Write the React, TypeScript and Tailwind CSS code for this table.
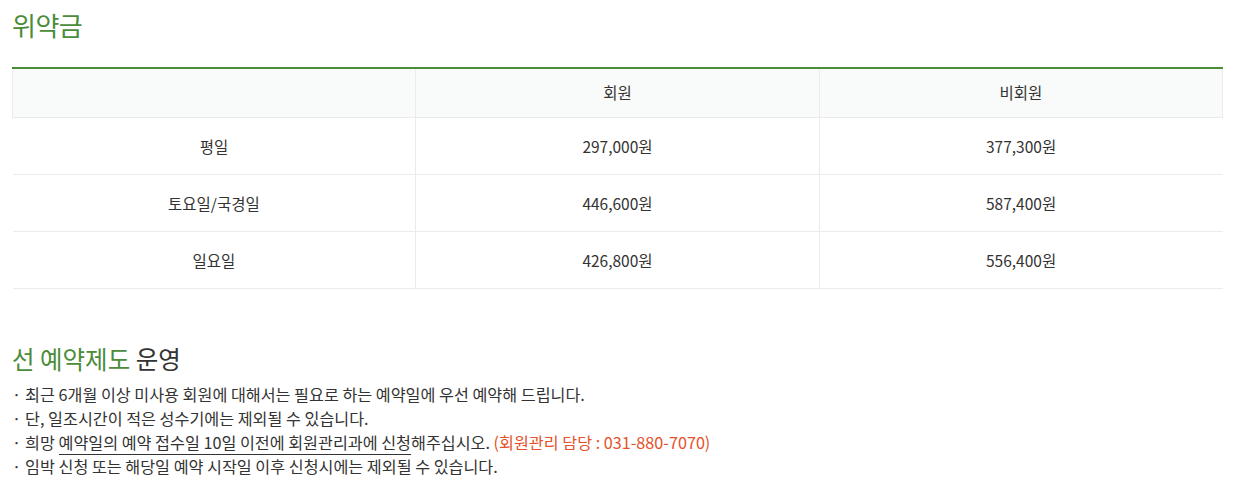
import React from 'react';

const rows = [
  { day: '평일', member: '297,000원', guest: '377,300원' },
  { day: '토요일/국경일', member: '446,600원', guest: '587,400원' },
  { day: '일요일', member: '426,800원', guest: '556,400원' },
];

const App: React.FC = () => {
  return (
    <div
      className="bg-white w-[1235px] h-[487px] px-3 text-[#333]"
      style={{ fontFamily: '"Noto Sans CJK KR", "Noto Sans", sans-serif' }}
    >
      <h2 className="pt-[6px] text-[26px] leading-[38px] text-[#4a8c39] font-normal tracking-[-0.5px]">위약금</h2>

      {/* Penalty table */}
      <table className="mt-[23px] w-full border-collapse border-t-2 border-[#4a8c39] text-[15.5px]">
        <thead>
          <tr className="bg-[#f9fafa] h-[49px]">
            <th className="w-1/3 border border-[#ebebeb] border-t-0 font-normal"></th>
            <th className="w-1/3 border border-[#ebebeb] border-t-0 font-normal">회원</th>
            <th className="w-1/3 border border-[#ebebeb] border-t-0 font-normal">비회원</th>
          </tr>
        </thead>
        <tbody>
          {rows.map(r => (
            <tr key={r.day} className="h-[57px] border-b border-[#ebebeb]">
              <td className="text-center pt-[2px]">{r.day}</td>
              <td className="text-center pt-[2px] border-l border-[#ebebeb]">{r.member}</td>
              <td className="text-center pt-[2px] border-l border-[#ebebeb]">{r.guest}</td>
            </tr>
          ))}
        </tbody>
      </table>

      <h2 className="mt-[53px] text-[24.5px] leading-[34px] font-normal text-[#333]">
        <span className="text-[#4a8c39]">선 예약제도</span> 운영
      </h2>

      <ul className="mt-[6px] text-[16.2px] leading-[24px]">
        <li className="flex gap-[4px]"><span>·</span><span>최근 6개월 이상 미사용 회원에 대해서는 필요로 하는 예약일에 우선 예약해 드립니다.</span></li>
        <li className="flex gap-[4px]"><span>·</span><span>단, 일조시간이 적은 성수기에는 제외될 수 있습니다.</span></li>
        <li className="flex gap-[4px]">
          <span>·</span>
          <span>
            희망 <span className="border-b border-[#333]">예약일의 예약 접수일 10일 이전에 회원관리과에 신청</span>해주십시오.{' '}
            <span className="text-[#e5512b]">(회원관리 담당 : 031-880-7070)</span>
          </span>
        </li>
        <li className="flex gap-[4px]"><span>·</span><span>임박 신청 또는 해당일 예약 시작일 이후 신청시에는 제외될 수 있습니다.</span></li>
      </ul>
    </div>
  );
};

export default App;
